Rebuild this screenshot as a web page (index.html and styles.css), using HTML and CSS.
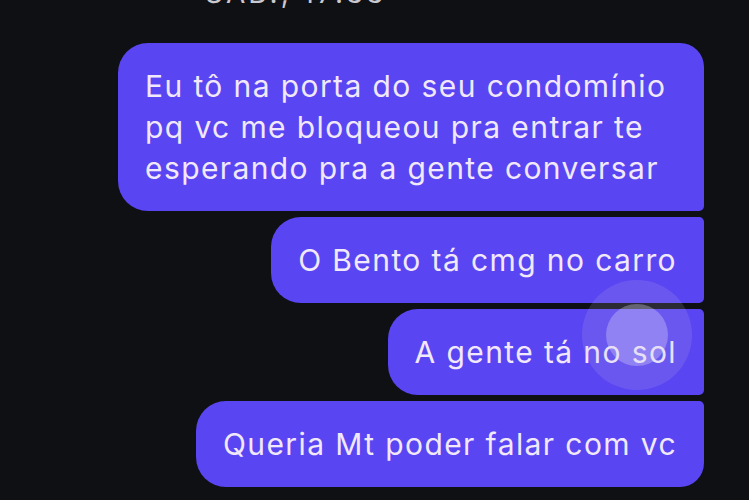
FILE: index.html
```html
<!DOCTYPE html>
<html>
<head>
    <title>Conversa</title>
    <meta charset="UTF-8">
    <link rel="stylesheet" href="styles.css">
</head>
<body>
    <div class="chat">
        <div class="stamp">SÁB., 17:33</div>
        <div class="messages">
            <div class="bubble first">Eu tô na porta do seu condomínio pq vc me bloqueou pra entrar te esperando pra a gente conversar</div>
            <div class="bubble middle">O Bento tá cmg no carro</div>
            <div class="bubble middle">A gente tá no sol</div>
            <div class="bubble last">Queria Mt poder falar com vc</div>
        </div>
        <div class="touch">
            <div class="touch-core"></div>
        </div>
    </div>
</body>
</html>
```

FILE: styles.css
```css
:root {
    --bg: #0f1014;
    --bubble: #5a45f2;
    --bubble-text: #f1e9fb;
}

* {
    margin: 0;
    padding: 0;
    box-sizing: border-box;
}

body {
    background: var(--bg);
    font-family: Inter, 'Liberation Sans', sans-serif;
    height: 100vh;
    overflow: hidden;
}

.chat {
    position: relative;
    display: flow-root;
    height: 100%;
}

.stamp {
    color: #c9c9cf;
    font-size: 28px;
    line-height: 28px;
    margin-top: -21px;
    padding-left: 205px;
    letter-spacing: 3px;
}

.messages {
    display: flex;
    flex-direction: column;
    align-items: flex-end;
    gap: 6px;
    padding-right: 45px;
    margin-top: 36px;
}

.bubble {
    background: var(--bubble);
    color: var(--bubble-text);
    font-size: 30px;
    line-height: 41px;
    letter-spacing: 1.4px;
    padding: 22.5px 27px;
    max-width: 586px;
    border-radius: 30px 5px 5px 30px;
}

.bubble.first {
    border-top-right-radius: 24px;
}

.bubble.last {
    border-bottom-right-radius: 24px;
}

.touch {
    position: absolute;
    left: 582px;
    top: 280px;
    width: 110px;
    height: 110px;
    border-radius: 50%;
    background: rgba(190, 185, 230, 0.16);
    display: flex;
    align-items: center;
    justify-content: center;
}

.touch-core {
    width: 62px;
    height: 62px;
    border-radius: 50%;
    background: rgba(225, 220, 245, 0.32);
}
```
